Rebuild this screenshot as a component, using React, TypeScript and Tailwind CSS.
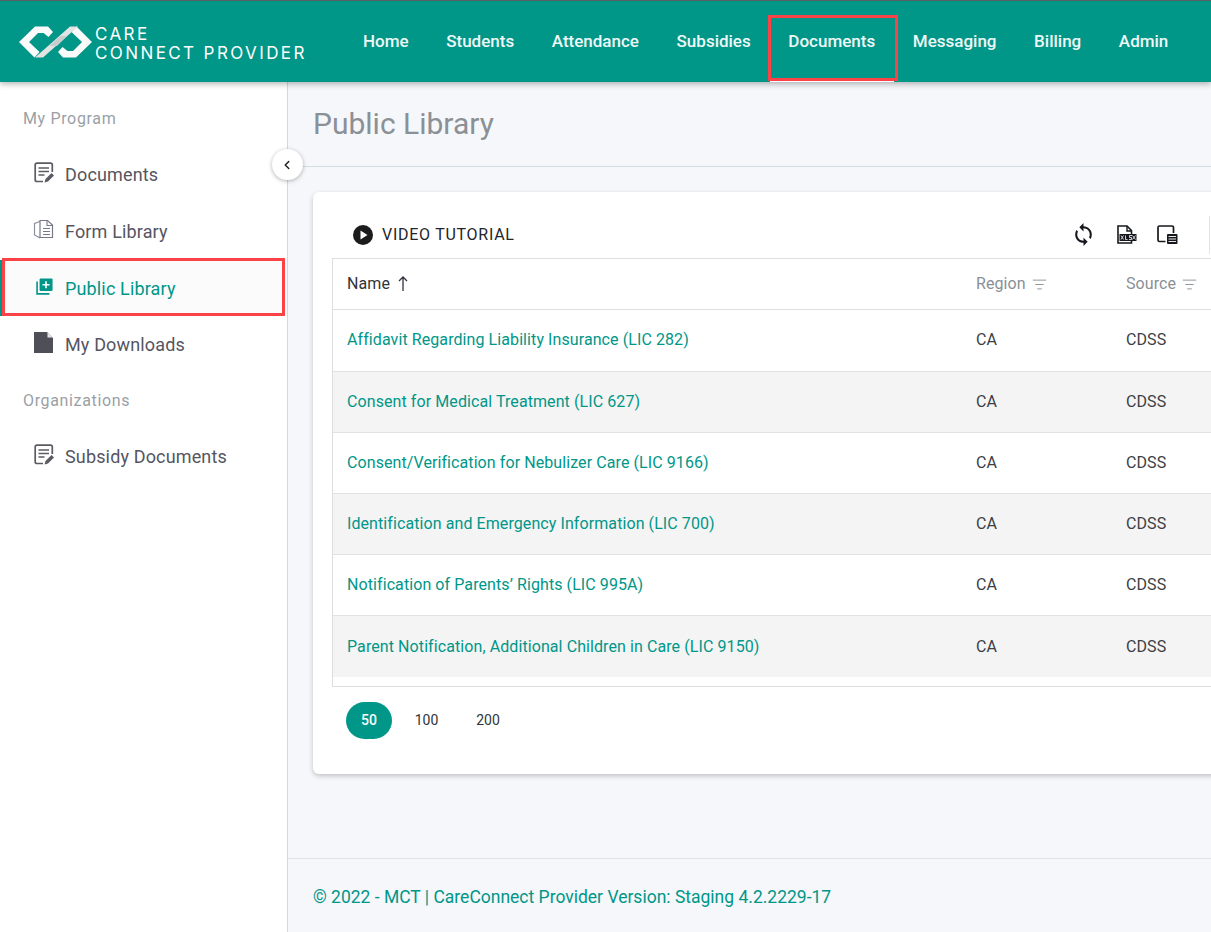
import { ChevronLeft, ListFilter } from "lucide-react";
import { MdSync } from "react-icons/md";

const navItems = ["Home", "Students", "Attendance", "Subsidies", "Documents", "Messaging", "Billing", "Admin"];

const rows = [
  { name: "Affidavit Regarding Liability Insurance (LIC 282)", h: "h-[62px] pb-[2px]", bg: "bg-white" },
  { name: "Consent for Medical Treatment (LIC 627)", h: "h-[61px]", bg: "bg-[#f4f4f4]" },
  { name: "Consent/Verification for Nebulizer Care (LIC 9166)", h: "h-[61px]", bg: "bg-white" },
  { name: "Identification and Emergency Information (LIC 700)", h: "h-[61px]", bg: "bg-[#f4f4f4]" },
  { name: "Notification of Parents’ Rights (LIC 995A)", h: "h-[61px]", bg: "bg-white" },
  { name: "Parent Notification, Additional Children in Care (LIC 9150)", h: "h-[61px]", bg: "bg-[#f4f4f4]" },
];

function Logo() {
  return (
    <svg width="73" height="32" viewBox="0 0 73 32" className="shrink-0">
      <path d="M0 16L16 0.5H29L34 6L29.5 11L24.5 7H19L10 16L20.5 26L15.5 31.5Z" fill="#fafafa" />
      <path d="M73 16L57 31.5H44L39 26L43.5 21L48.5 25H54L63 16L52.5 6L57.5 0.5Z" fill="#fafafa" />
      <path d="M51 0.5H59L24 31.5H16Z" fill="#e2e4e4" />
      <path d="M41 10L48 10L38 20L30 20Z" fill="#c9cdcd" />
    </svg>
  );
}

function NoteIcon() {
  return (
    <svg width="20" height="21" viewBox="0 0 20 21" fill="none">
      <path d="M9 19.5H3C2 19.5 1.2 18.8 1.2 18V3C1.2 2 2 1.2 3 1.2H16.5C17.5 1.2 18.3 2 18.3 3V10" stroke="#5b5b63" strokeWidth="1.7" />
      <path d="M4.5 6H15M4.5 9.5H15M4.5 13H10.5" stroke="#5b5b63" strokeWidth="1.5" />
      <path d="M10.5 20.5L11.5 17L17.5 11L20 13.5L14 19.5Z" fill="#5b5b63" />
    </svg>
  );
}

function FormIcon() {
  return (
    <svg width="21" height="21" viewBox="0 0 21 21" fill="none" className="-ml-px">
      <path d="M7 2.5L1.5 4.5V16L7 19" stroke="#8d8f9c" strokeWidth="1.2" />
      <path d="M7 1.5H14.5L19.5 6V18.5H7Z" stroke="#77798a" strokeWidth="1.2" fill="#fff" />
      <path d="M14 1.5V6.5H19.5" stroke="#77798a" strokeWidth="1.1" />
      <path d="M10 9.5H17M10 12.5H17M10 15.5H17" stroke="#77798a" strokeWidth="1.1" />
    </svg>
  );
}

function PublicIcon() {
  return (
    <svg width="17" height="17" viewBox="0 0 19 19" fill="none" className="ml-[2px]">
      <rect x="4" y="0.5" width="14.5" height="14" rx="1.2" fill="#009688" />
      <path d="M1.2 4V17.8H15" stroke="#009688" strokeWidth="1.8" />
      <path d="M11.2 3.5V11.5M7.2 7.5H15.2" stroke="#fff" strokeWidth="1.8" />
    </svg>
  );
}

function FileIcon() {
  return (
    <svg width="19" height="21" viewBox="0 0 19 21">
      <path d="M0 0H13L19 6V21H0Z" fill="#4f4f57" />
      <path d="M13.5 0.5V5.5H18.5Z" fill="#e5e5e8" />
    </svg>
  );
}

function XlsxIcon() {
  return (
    <svg width="21" height="20" viewBox="0 0 21 20" fill="none">
      <path d="M2 15V1H11L15.5 5.5V18H2Z" stroke="#16181d" strokeWidth="1.6" />
      <path d="M11 1V6H15.5" stroke="#16181d" strokeWidth="1.4" />
      <rect x="3.5" y="9" width="17" height="7" fill="#16181d" />
      <path d="M5 10.5L7.5 14.5M7.5 10.5L5 14.5M9.5 10.5V14.5H11.5M16 10.5H13.5V12.5H15.5V14.5H13M16.5 10.5L19.5 14.5M19.5 10.5L16.5 14.5" stroke="#fff" strokeWidth="0.8" />
    </svg>
  );
}

function ColumnsIcon() {
  return (
    <svg width="21" height="20" viewBox="0 0 21 20" fill="none">
      <path d="M8.5 16.5H2.5C1.5 16.5 1 16 1 15V2.5C1 1.5 1.5 1 2.5 1H15C16 1 16.5 1.5 16.5 2.5V8" stroke="#16181d" strokeWidth="1.7" />
      <rect x="10" y="9" width="10.5" height="10" rx="1" fill="#16181d" />
      <path d="M11.5 11.5H19M11.5 14H19M11.5 16.5H19" stroke="#fff" strokeWidth="0.9" />
    </svg>
  );
}

function SideItem({ label, icon, active, h = "h-[57px]" }: { label: string; icon: React.ReactNode; active?: boolean; h?: string }) {
  return (
    <div className={`flex items-center text-[18px] tracking-[0.15px] ${h} ${active ? "text-[#009688]" : "text-[#55555f]"}`}>
      <span className="-mt-[5px] flex w-[65px] shrink-0 justify-start pl-[34px]">{icon}</span>
      {label}
    </div>
  );
}

export default function App() {
  return (
    <div className="flex h-[932px] w-[1211px] flex-col overflow-hidden bg-white font-['Roboto',sans-serif]">
      <header className="relative z-20 flex h-[82px] shrink-0 items-center border-t border-[#5a6062] bg-[#009688] shadow-[0_2px_6px_rgba(0,0,0,0.3)]">
        <div className="ml-[19px] flex w-[325.2px] items-center gap-[3px]">
          <Logo />
          <div className="pt-[4px] text-[17px] leading-[19px] tracking-[2.4px] text-white font-['Inter',sans-serif]">
            <div>CARE</div>
            <div className="whitespace-nowrap">CONNECT PROVIDER</div>
          </div>
        </div>
        <nav className="flex h-full items-center">
          {navItems.map((item) => (
            <div
              key={item}
              className={`flex h-full items-center px-[18.8px] text-[17px] font-medium text-[#eef8f7] ${
                item === "Documents" ? "relative" : ""
              }`}
            >
              {item}
              {item === "Documents" && (
                <>
                  <span className="absolute -left-[1.7px] -right-[4px] top-[14px] bottom-px border-[3px] border-[#fb4347]" />
                  <span className="absolute inset-x-0 bottom-0 h-px bg-white" />
                </>
              )}
            </div>
          ))}
        </nav>
      </header>

      <div className="flex min-h-0 flex-1">
        <aside className="relative w-[288px] shrink-0 border-r border-[#d5d8dc] bg-white pt-[27px]">
          <div className="mb-[17px] pl-[23px] text-[16px] leading-[20px] tracking-[0.65px] text-[#9a9fa6]">My Program</div>
          <SideItem label="Documents" icon={<NoteIcon />} />
          <SideItem label="Form Library" icon={<FormIcon />} />
          <div className="relative h-[56px] border-l-[2px] border-[#009688] bg-[#fbfbfc]">
            <div className="-ml-[2px]">
              <SideItem label="Public Library" icon={<PublicIcon />} active h="h-[57px]" />
            </div>
            <span className="absolute -top-[2px] bottom-0 left-0 right-[2px] border-[3px] border-[#fb4347]" />
          </div>
          <SideItem label="My Downloads" icon={<FileIcon />} />
          <div className="mt-[18px] mb-[17px] pl-[23px] text-[16px] leading-[20px] tracking-[0.65px] text-[#9a9fa6]">Organizations</div>
          <SideItem label="Subsidy Documents" icon={<NoteIcon />} />
          <button className="absolute right-[-15.5px] top-[67px] z-10 flex h-[31px] w-[31px] items-center justify-center rounded-full bg-white shadow-[0_1px_4px_rgba(0,0,0,0.3)]">
            <ChevronLeft size={14} strokeWidth={2.6} color="#222" />
          </button>
        </aside>

        <main className="flex min-w-0 flex-1 flex-col bg-[#f5f7fb]">
          <div className="flex h-[85px] shrink-0 items-center border-b border-[#d3dde3] pl-[25px] pb-[2px] text-[30px] text-[#8b9095]">
            Public Library
          </div>
          <div className="ml-[25px] mt-[25px] h-[582px] w-[1000px] shrink-0 rounded-[6px] bg-white px-[19px] shadow-[0_2px_5px_rgba(0,0,0,0.22)]">
            <div className="flex h-[66px] w-[878px] items-center pt-[19px]">
              <svg width="20" height="20" viewBox="0 0 20 20" className="ml-[21px] mr-[9px]">
                <circle cx="10" cy="10" r="10" fill="#1c1c1c" />
                <path d="M7.5 5.5L14.5 10L7.5 14.5Z" fill="#fff" />
              </svg>
              <span className="text-[16px] tracking-[0.73px] text-[#22252b]">VIDEO TUTORIAL</span>
              <span className="ml-auto flex items-center">
                <MdSync size={25} color="#16181d" className="-ml-[3px] -mr-[4px]" />
                <span className="ml-[24px]">
                  <XlsxIcon />
                </span>
                <span className="ml-[20px]">
                  <ColumnsIcon />
                </span>
                <span className="ml-[31px] h-[38px] w-px bg-[#e4e4e4]" />
              </span>
            </div>
            <div className="w-[900px] border-y border-l border-[#dedede] pb-[9px] text-[16px] tracking-[0.085px]">
              <div className="flex h-[51px] items-center border-b border-[#dedede]">
                <div className="flex w-[643px] items-center pl-[14px] text-[#30343a]">
                  Name
                  <svg width="10" height="15" viewBox="0 0 10 15" fill="none" stroke="#30343a" strokeWidth="1.3" className="ml-[8px] -mt-px">
                    <path d="M5 15V1M1 5L5 1L9 5" />
                  </svg>
                </div>
                <div className="flex w-[150px] items-center gap-[6px] text-[#8a8f96]">
                  Region <ListFilter size={15} strokeWidth={1.5} />
                </div>
                <div className="flex items-center gap-[6px] text-[#8a8f96]">
                  Source <ListFilter size={15} strokeWidth={1.5} />
                </div>
              </div>
              {rows.map((row) => (
                <div key={row.name} className={`flex items-center border-b border-[#e2e2e2] last:border-b-0 ${row.h} ${row.bg}`}>
                  <div className="w-[643px] pl-[14px] text-[#009688]">{row.name}</div>
                  <div className="w-[150px] text-[#3c3f44]">CA</div>
                  <div className="text-[#3c3f44]">CDSS</div>
                </div>
              ))}
            </div>
            <div className="mt-[15px] flex items-center pl-[14px] text-[14px] text-[#30343a]">
              <span className="flex h-[37px] w-[46px] items-center justify-center rounded-full bg-[#009688] font-medium text-white">50</span>
              <span className="flex w-[69px] justify-center">100</span>
              <span className="flex w-[54px] justify-center">200</span>
            </div>
          </div>
          <div className="mt-auto flex h-[74px] shrink-0 items-center border-t border-[#e0e3e8] pl-[25px] pt-[4px] text-[17.5px] text-[#009688]">
            © 2022 - MCT | CareConnect Provider Version: Staging 4.2.2229-17
          </div>
        </main>
      </div>
    </div>
  );
}
